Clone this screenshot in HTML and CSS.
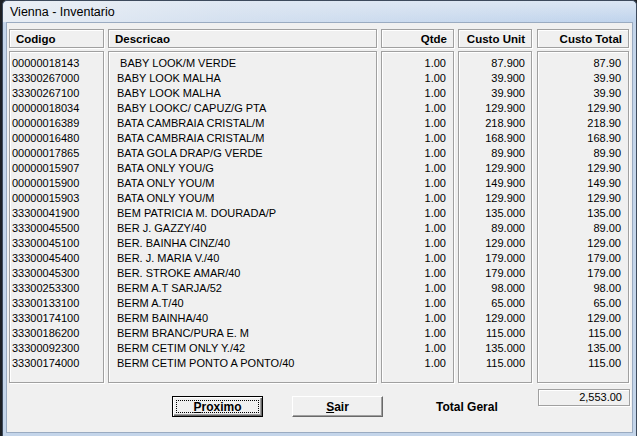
FILE: index.html
```html
<!DOCTYPE html>
<html>
<head>
<meta charset="utf-8">
<title>Vienna - Inventario</title>
<link rel="stylesheet" href="styles.css">
</head>
<body>
<div class="window">
  <div class="titlebar">Vienna - Inventario</div>
  <div class="client">
    <div class="table">
      <div class="head">Codigo</div>
      <div class="head">Descricao</div>
      <div class="head right">Qtde</div>
      <div class="head right">Custo Unit</div>
      <div class="head right">Custo Total</div>

      <div class="list codes">
        <div>00000018143</div><div>33300267000</div><div>33300267100</div><div>00000018034</div><div>00000016389</div><div>00000016480</div><div>00000017865</div><div>00000015907</div><div>00000015900</div><div>00000015903</div><div>33300041900</div><div>33300045500</div><div>33300045100</div><div>33300045400</div><div>33300045300</div><div>33300253300</div><div>33300133100</div><div>33300174100</div><div>33300186200</div><div>33300092300</div><div>33300174000</div>
      </div>
      <div class="list desc">
        <div> BABY LOOK/M VERDE</div><div>BABY LOOK MALHA</div><div>BABY LOOK MALHA</div><div>BABY LOOKC/ CAPUZ/G PTA</div><div>BATA CAMBRAIA CRISTAL/M</div><div>BATA CAMBRAIA CRISTAL/M</div><div>BATA GOLA DRAP/G VERDE</div><div>BATA ONLY YOU/G</div><div>BATA ONLY YOU/M</div><div>BATA ONLY YOU/M</div><div>BEM PATRICIA M. DOURADA/P</div><div>BER J. GAZZY/40</div><div>BER. BAINHA CINZ/40</div><div>BER. J. MARIA V./40</div><div>BER. STROKE AMAR/40</div><div>BERM A.T SARJA/52</div><div>BERM A.T/40</div><div>BERM BAINHA/40</div><div>BERM BRANC/PURA E. M</div><div>BERM CETIM ONLY Y./42</div><div>BERM CETIM PONTO A PONTO/40</div>
      </div>
      <div class="list num qtde">
        <div>1.00</div><div>1.00</div><div>1.00</div><div>1.00</div><div>1.00</div><div>1.00</div><div>1.00</div><div>1.00</div><div>1.00</div><div>1.00</div><div>1.00</div><div>1.00</div><div>1.00</div><div>1.00</div><div>1.00</div><div>1.00</div><div>1.00</div><div>1.00</div><div>1.00</div><div>1.00</div><div>1.00</div>
      </div>
      <div class="list num unit">
        <div>87.900</div><div>39.900</div><div>39.900</div><div>129.900</div><div>218.900</div><div>168.900</div><div>89.900</div><div>129.900</div><div>149.900</div><div>129.900</div><div>135.000</div><div>89.000</div><div>129.000</div><div>179.000</div><div>179.000</div><div>98.000</div><div>65.000</div><div>129.000</div><div>115.000</div><div>135.000</div><div>115.000</div>
      </div>
      <div class="list num total">
        <div>87.90</div><div>39.90</div><div>39.90</div><div>129.90</div><div>218.90</div><div>168.90</div><div>89.90</div><div>129.90</div><div>149.90</div><div>129.90</div><div>135.00</div><div>89.00</div><div>129.00</div><div>179.00</div><div>179.00</div><div>98.00</div><div>65.00</div><div>129.00</div><div>115.00</div><div>135.00</div><div>115.00</div>
      </div>
    </div>

    <div class="footer">
      <button class="btn btn-default"><span class="focus"><u>P</u>roximo</span></button>
      <button class="btn btn-sair"><u>S</u>air</button>
      <div class="total-label">Total Geral</div>
      <div class="total-box">2,553.00</div>
    </div>
  </div>
</div>
</body>
</html>
```

FILE: styles.css
```css
html, body {
  margin: 0;
  padding: 0;
}
body {
  width: 637px;
  height: 436px;
  overflow: hidden;
  background: #1c1f24;
  font-family: "Liberation Sans", Arial, sans-serif;
  font-size: 11px;
  color: #000;
}
.window {
  margin-left: 2px;
  width: 635px;
  height: 436px;
  box-sizing: border-box;
  border: 1px solid #3d4a5c;
  border-bottom: none;
  border-radius: 5px 5px 0 0;
  background: #c4d5ea;
  padding: 0 3px 3px 3px;
  display: flex;
  flex-direction: column;
}
.titlebar {
  height: 21px;
  line-height: 22px;
  font-size: 12.5px;
  color: #000;
  background: linear-gradient(90deg, rgba(236,240,245,0.9) 0%, rgba(226,233,242,0.6) 35%, rgba(200,217,238,0) 100%),
              linear-gradient(180deg, #dbe6f3 0%, #bfd3ec 100%);
  margin: 0 -3px;
  padding-left: 7px;
  border-radius: 5px 5px 0 0;
}
.client {
  flex: 1;
  background: #f0f0f0;
  border: 1px solid #9aabc1;
  padding: 6px 0 0 2px;
  display: flex;
  flex-direction: column;
}
.table {
  display: grid;
  grid-template-columns: 95px 269px 73px 74px 93px;
  grid-template-rows: 19px 332px;
  column-gap: 4px;
  row-gap: 3px;
}
.table > :nth-child(5), .table > :nth-child(10) {
  margin-left: 1px;
}
.head, .list, .total-box {
  border: 1px solid #a0a0a0;
  box-shadow: inset 1px 1px 0 #fff, 1px 1px 0 #fff;
  box-sizing: border-box;
}
.head {
  font-weight: bold;
  font-size: 11.5px;
  line-height: 18px;
  padding: 0 6px;
  white-space: nowrap;
}
.head.right {
  text-align: right;
}
.list {
  padding-top: 4px;
}
.list > div {
  height: 15px;
  line-height: 15px;
  white-space: pre;
}
.codes { padding-left: 2px; }
.desc { padding-left: 8px; }
.num { text-align: right; }
.qtde { padding-right: 7px; }
.unit { padding-right: 6px; }
.total { padding-right: 7px; }

.footer {
  display: flex;
  align-items: flex-start;
  margin-top: 6px;
}
.btn {
  position: relative;
  width: 91px;
  height: 21px;
  margin-top: 7px;
  padding: 0;
  background: #f0f0f0;
  font-family: "Liberation Sans", Arial, sans-serif;
  font-weight: bold;
  font-size: 12px;
  color: #000;
  box-sizing: border-box;
}
.btn-default {
  margin-left: 163px;
  border: 1px solid #000;
  box-shadow: inset 1px 1px 0 #fff, inset -1px -1px 0 #696969, inset -2px -2px 0 #a0a0a0;
}
.focus {
  position: absolute;
  left: 3px;
  top: 3px;
  right: 3px;
  bottom: 3px;
  border: 1px dotted #000;
  line-height: 12px;
}
.btn-sair {
  margin-left: 29px;
  border: 1px solid;
  border-color: #fff #696969 #696969 #fff;
  box-shadow: inset -1px -1px 0 #a0a0a0;
}
.total-label {
  margin-left: 53px;
  margin-top: 11px;
  font-weight: bold;
  font-size: 12px;
}
.total-box {
  margin-left: auto;
  margin-right: 2px;
  width: 92px;
  height: 17px;
  line-height: 15px;
  text-align: right;
  padding-right: 7px;
}
```
